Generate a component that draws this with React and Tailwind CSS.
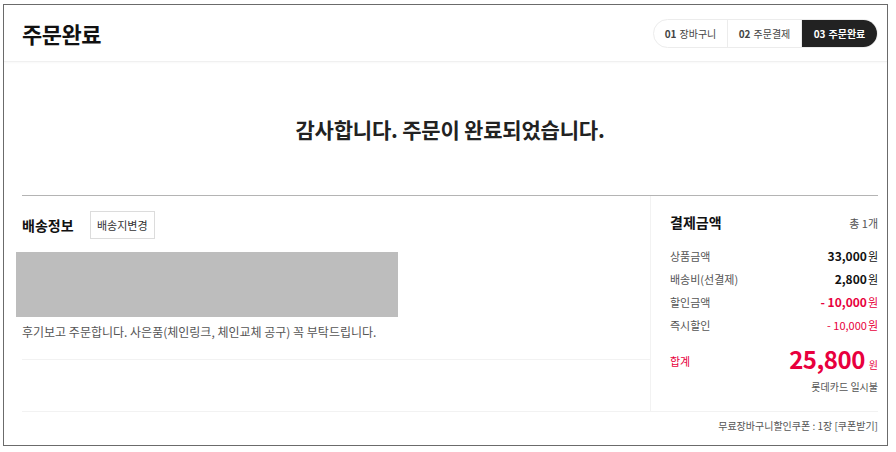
import React from "react";

const steps = [
  { no: "01", label: "장바구니" },
  { no: "02", label: "주문결제" },
  { no: "03", label: "주문완료", active: true },
];

const rows = [
  { label: "상품금액", value: "33,000", bold: true },
  { label: "배송비(선결제)", value: "2,800", bold: true },
  { label: "할인금액", value: "- 10,000", bold: true, red: true },
  { label: "즉시할인", value: "- 10,000", red: true },
];

export default function App() {
  return (
    <div className="w-[896px] h-[452px] bg-white pt-[4px] pl-[3px] font-['Noto_Sans_CJK_KR',sans-serif] text-[#222]">
      <div className="w-[885px] h-[442px] border border-[#6b6b6b] flex flex-col">
        {/* ===== HEADER ===== */}
        <div className="h-[57px] flex items-center justify-between pl-[18px] pr-[9px] border-b border-[#f0f0f0] shadow-[0_1px_2px_rgba(0,0,0,0.03)]">
          <h1 className="text-[22px] font-bold leading-none tracking-[-0.5px] text-[#111]">주문완료</h1>
          <div className="flex h-[29px] rounded-full border border-[#ececec] overflow-hidden text-[10px]">
            {steps.map((s) => (
              <div
                key={s.no}
                className={
                  s.active
                    ? "w-[75px] flex items-center justify-center gap-[3px] bg-[#222] text-white font-bold"
                    : "w-[74px] flex items-center justify-center gap-[3px] border-r border-[#ececec] last:border-r-0 text-[#444]"
                }
              >
                <span className="font-bold">{s.no}</span>
                <span>{s.label}</span>
              </div>
            ))}
          </div>
        </div>

        {/* ===== BODY ===== */}
        <div className="pl-[18px] pr-[9px] flex-1 flex flex-col">
          <div className="pt-[53px] pb-[52px] border-b border-[#b4b4b4] text-center">
            <p className="text-[21px] leading-[28px] font-bold tracking-[-0.2px] text-[#222]">
              감사합니다. 주문이 완료되었습니다.
            </p>
          </div>

          <div className="flex h-[216px] border-b border-[#f2f2f2]">
            {/* left */}
            <div className="w-[628px] flex flex-col">
              <div className="pt-[15px] pb-[18px] border-b border-[#f2f2f2]">
                <div className="flex items-center h-[28px]">
                  <h2 className="text-[14px] font-bold text-[#111] w-[68px]">배송정보</h2>
                  <button className="h-[28px] px-[6px] border border-[#dcdcdc] bg-white text-[11px] text-[#333]">
                    배송지변경
                  </button>
                </div>
                <div className="-ml-[6px] mt-[13px] w-[382px] h-[65px] bg-[#bdbdbd]" />
                <p className="mt-[6px] text-[12px] leading-[18px] text-[#555]">
                  후기보고 주문합니다. 사은품(체인링크, 체인교체 공구) 꼭 부탁드립니다.
                </p>
              </div>
            </div>

            {/* right */}
            <div className="flex-1 border-l border-[#f2f2f2] pl-[19px] pt-[15px]">
              <div className="flex items-center justify-between h-[22px]">
                <h2 className="text-[14px] font-bold text-[#111]">결제금액</h2>
                <span className="text-[11px] text-[#555] mt-[3px]">총 1개</span>
              </div>
              <div className="mt-[14px] flex flex-col gap-[5px]">
                {rows.map((r) => (
                  <div key={r.label} className="flex items-center justify-between h-[18px]">
                    <span className="text-[11px] text-[#555]">{r.label}</span>
                    <span className={(r.red ? "text-[#e8003d]" : "text-[#111]") + " text-[12px]"}>
                      <span className={r.bold ? "font-bold" : "text-[11px]"}>{r.value}</span>
                      <span className="text-[11px] ml-[1px]">원</span>
                    </span>
                  </div>
                ))}
              </div>
              <div className="mt-[12px] flex items-center justify-between h-[26px] text-[#e8003d]">
                <span className="text-[11px] mt-[4px]">합계</span>
                <span className="flex items-baseline">
                  <span className="text-[24px] font-bold leading-[26px] tracking-[-0.5px]">25,800</span>
                  <span className="text-[10px] ml-[4px]">원</span>
                </span>
              </div>
              <p className="mt-[7px] text-right text-[10px] text-[#555]">롯데카드 일시불</p>
            </div>
          </div>

          <div className="flex justify-end pt-[6px]">
            <p className="text-[10px] text-[#555]">무료장바구니할인쿠폰 : 1장 [쿠폰받기]</p>
          </div>
        </div>
      </div>
    </div>
  );
}
